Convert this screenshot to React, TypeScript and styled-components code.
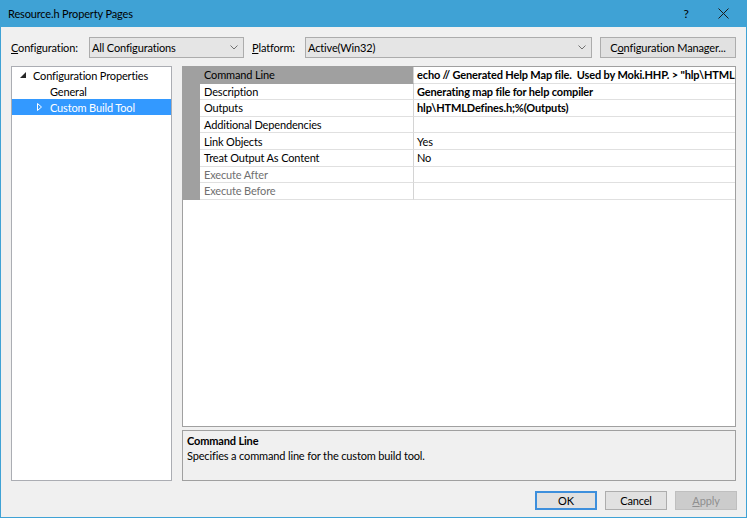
import React, { FC } from "react";
import styled, { createGlobalStyle } from "styled-components";

const FONT = `"Lato", "Noto Sans", sans-serif`;

const GlobalStyle = createGlobalStyle`
  html, body {
    margin: 0;
    padding: 0;
    background: #f0f0f0;
  }
  body {
    font-family: ${FONT};
    font-size: 11px;
    letter-spacing: -0.15px;
    color: #000;
  }
  * {
    box-sizing: border-box;
  }
`;

const Window = styled.div`
  width: 747px;
  height: 518px;
  display: flex;
  flex-direction: column;
  background: #f0f0f0;
  border: 1px solid #3fa2d5;
  border-top: none;
  overflow: hidden;
`;

const TitleBar = styled.div`
  height: 27px;
  flex: none;
  display: flex;
  align-items: center;
  background: #3fa2d5;
  padding-left: 7px;
`;

const Title = styled.div`
  flex: 1;
  font-size: 11px;
`;

const CaptionButton = styled.div<{ $w: number }>`
  width: ${(p) => p.$w}px;
  height: 27px;
  display: flex;
  align-items: center;
  justify-content: center;
  font-size: 12px;
`;

const Body = styled.div`
  flex: 1;
  display: flex;
  flex-direction: column;
  padding: 10px 10px 0 10px;
`;

const ConfigRow = styled.div`
  height: 21px;
  display: flex;
  align-items: center;
`;

const Label = styled.div<{ $w: number; $pl?: number }>`
  width: ${(p) => p.$w}px;
  padding-left: ${(p) => p.$pl ?? 0}px;
  flex: none;
`;

const Key = styled.span`
  text-decoration: underline;
`;

const Combo = styled.div<{ $w?: number }>`
  height: 21px;
  ${(p) => (p.$w ? `width: ${p.$w}px; flex: none;` : "flex: 1;")}
  display: flex;
  align-items: center;
  padding: 0 5px 0 2px;
  background: #e5e5e5;
  border: 1px solid #acacac;
`;

const ComboText = styled.span`
  flex: 1;
`;

const PushButton = styled.div<{ $w: number; $default?: boolean; $disabled?: boolean }>`
  width: ${(p) => p.$w}px;
  height: ${(p) => (p.$default !== undefined ? 19 : 21)}px;
  flex: none;
  display: flex;
  align-items: center;
  justify-content: center;
  background: ${(p) => (p.$disabled ? "#cccccc" : "#e1e1e1")};
  border: ${(p) => (p.$default ? "2px solid #3d8fdc" : p.$disabled ? "1px solid #bfbfbf" : "1px solid #adadad")};
  color: ${(p) => (p.$disabled ? "#8f8f8f" : "#000")};
`;

const ManagerButton = styled(PushButton)`
  margin-left: 8px;
`;

const Main = styled.div`
  margin-top: 8px;
  height: 415px;
  display: flex;
  gap: 10px;
`;

const Tree = styled.div`
  width: 161px;
  flex: none;
  background: #fff;
  border: 1px solid #abadb3;
`;

const TreeRow = styled.div<{ $indent: number; $selected?: boolean }>`
  height: 16px;
  display: flex;
  align-items: center;
  padding-left: ${(p) => p.$indent}px;
  background: ${(p) => (p.$selected ? "#3399ff" : "transparent")};
  color: ${(p) => (p.$selected ? "#fff" : "#000")};
`;

const Toggle = styled.span`
  width: 13px;
  flex: none;
  display: flex;
  align-items: center;
`;

const RightPane = styled.div`
  flex: 1;
  display: flex;
  flex-direction: column;
  gap: 3px;
`;

const Grid = styled.div`
  flex: 1;
  background: #fff;
  border: 1px solid #a0a0a0;
  overflow: hidden;
`;

const GridRow = styled.div`
  height: 16.6px;
  display: grid;
  grid-template-columns: 17px 214px 1fr;
`;

const Gutter = styled.div`
  background: #a0a0a0;
`;

const NameCell = styled.div<{ $selected?: boolean; $dim?: boolean }>`
  display: flex;
  align-items: center;
  padding-left: 4px;
  background: ${(p) => (p.$selected ? "#a0a0a0" : "#fff")};
  color: ${(p) => (p.$dim ? "#707070" : "#000")};
  border-right: 1px solid #d4d4d4;
  border-bottom: 1px solid ${(p) => (p.$selected ? "#a0a0a0" : "#e0e0e0")};
  white-space: nowrap;
  overflow: hidden;
`;

const ValueCell = styled.div<{ $bold?: boolean }>`
  display: flex;
  align-items: center;
  padding-left: 3px;
  font-weight: ${(p) => (p.$bold ? 700 : 400)};
  border-bottom: 1px solid #e0e0e0;
  white-space: pre;
  overflow: hidden;
`;

const Description = styled.div`
  height: 51px;
  flex: none;
  background: #f0f0f0;
  border: 1px solid #a0a0a0;
  padding: 2px 4px 0 4px;
  line-height: 15px;
`;

const DescTitle = styled.div`
  font-weight: 700;
`;

const Footer = styled.div`
  margin-top: 10px;
  margin-right: -1px;
  display: flex;
  justify-content: flex-end;
  gap: 8px;
`;

const Chevron: FC = () => (
  <svg width="8" height="5" viewBox="0 0 8 5">
    <polyline points="0.5,0.5 4,4 7.5,0.5" fill="none" stroke="#707070" strokeWidth="1" />
  </svg>
);

const ExpandedArrow: FC = () => (
  <svg width="6" height="6" viewBox="0 0 6 6">
    <path d="M6 0 L6 6 L0 6 Z" fill="#262626" />
  </svg>
);

const CollapsedArrow: FC = () => (
  <svg width="5" height="8" viewBox="0 0 5 8">
    <path d="M0.5 0.5 L4.5 4 L0.5 7.5 Z" fill="none" stroke="#fff" strokeWidth="1" />
  </svg>
);

const CloseIcon: FC = () => (
  <svg width="11" height="11" viewBox="0 0 11 11">
    <path d="M0.5 0.5 L10.5 10.5 M10.5 0.5 L0.5 10.5" stroke="#1a1a1a" strokeWidth="1" />
  </svg>
);

type Property = { name: string; value?: string; bold?: boolean; dim?: boolean };

const properties: Property[] = [
  {
    name: "Command Line",
    value: 'echo // Generated Help Map file.  Used by Moki.HHP. > "hlp\\HTMLDefines.h"',
    bold: true,
  },
  { name: "Description", value: "Generating map file for help compiler", bold: true },
  { name: "Outputs", value: "hlp\\HTMLDefines.h;%(Outputs)", bold: true },
  { name: "Additional Dependencies" },
  { name: "Link Objects", value: "Yes" },
  { name: "Treat Output As Content", value: "No" },
  { name: "Execute After", dim: true },
  { name: "Execute Before", dim: true },
];

const App: FC = () => {
  return (
    <>
      <GlobalStyle />
      <Window>
        <TitleBar>
          <Title>Resource.h Property Pages</Title>
          <CaptionButton $w={28}>?</CaptionButton>
          <CaptionButton $w={46}>
            <CloseIcon />
          </CaptionButton>
        </TitleBar>
        <Body>
          <ConfigRow>
            <Label $w={78}>
              <Key>C</Key>onfiguration:
            </Label>
            <Combo $w={155}>
              <ComboText>All Configurations</ComboText>
              <Chevron />
            </Combo>
            <Label $w={61} $pl={8}>
              <Key>P</Key>latform:
            </Label>
            <Combo>
              <ComboText>Active(Win32)</ComboText>
              <Chevron />
            </Combo>
            <ManagerButton $w={136}>
              C<Key>o</Key>nfiguration Manager...
            </ManagerButton>
          </ConfigRow>

          <Main>
            <Tree>
              <TreeRow $indent={8}>
                <Toggle>
                  <ExpandedArrow />
                </Toggle>
                Configuration Properties
              </TreeRow>
              <TreeRow $indent={25}>
                <Toggle />
                General
              </TreeRow>
              <TreeRow $indent={25} $selected>
                <Toggle>
                  <CollapsedArrow />
                </Toggle>
                Custom Build Tool
              </TreeRow>
            </Tree>

            <RightPane>
              <Grid>
                {properties.map((p, i) => (
                  <GridRow key={p.name}>
                    <Gutter />
                    <NameCell $selected={i === 0} $dim={p.dim}>
                      {p.name}
                    </NameCell>
                    <ValueCell $bold={p.bold}>{p.value ?? ""}</ValueCell>
                  </GridRow>
                ))}
              </Grid>
              <Description>
                <DescTitle>Command Line</DescTitle>
                <div>Specifies a command line for the custom build tool.</div>
              </Description>
            </RightPane>
          </Main>

          <Footer>
            <PushButton $w={62} $default>
              OK
            </PushButton>
            <PushButton $w={62} $default={false}>
              Cancel
            </PushButton>
            <PushButton $w={62} $default={false} $disabled>
              <Key>A</Key>pply
            </PushButton>
          </Footer>
        </Body>
      </Window>
    </>
  );
};

export default App;
